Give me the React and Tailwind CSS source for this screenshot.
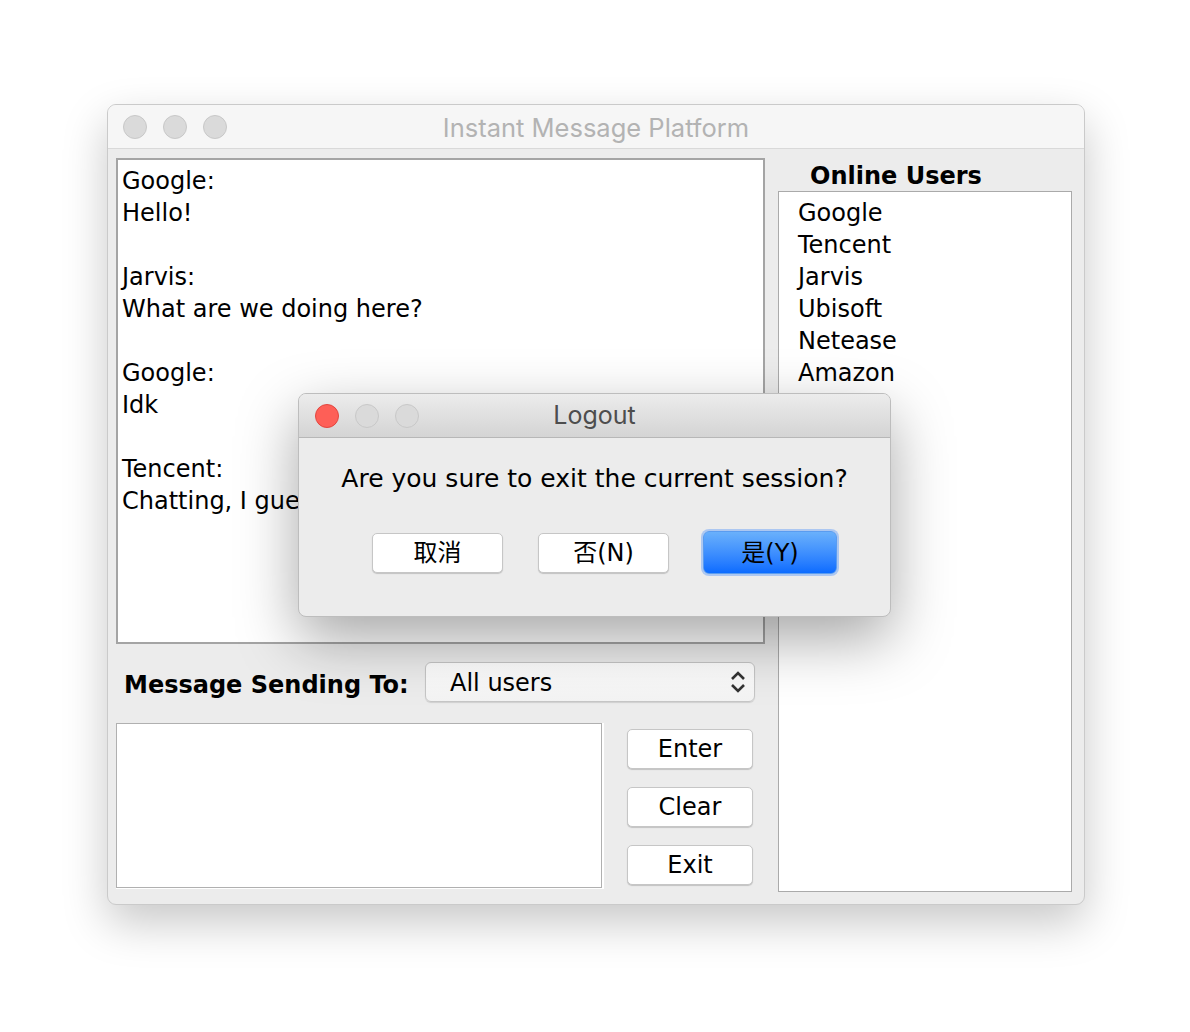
import React from "react";

const messages = [
  "Google:",
  "Hello!",
  "",
  "Jarvis:",
  "What are we doing here?",
  "",
  "Google:",
  "Idk",
  "",
  "Tencent:",
  "Chatting, I guess",
];

const users = ["Google", "Tencent", "Jarvis", "Ubisoft", "Netease", "Amazon"];

function Light({ color }) {
  // macOS style window button
  return (
    <span
      className={
        color === "red"
          ? "w-[24px] h-[24px] rounded-full bg-[#fe5f57] border border-[#e2463f]"
          : "w-[24px] h-[24px] rounded-full bg-[#dadada] border border-[#c8c8c8]"
      }
    />
  );
}

function MacButton({ children, className = "" }) {
  return (
    <button
      className={
        "h-[40px] rounded-[5px] bg-white border border-[#c6c6c6] shadow-[0_1px_1px_rgba(0,0,0,0.18)] text-[24px] leading-none text-black " +
        className
      }
    >
      {children}
    </button>
  );
}

function App() {
  return (
    <div className="relative w-[1190px] h-[1032px] bg-white overflow-hidden font-['DejaVu_Sans','Noto_Sans_CJK_SC',sans-serif]">
      <div className="pt-[104px] pl-[107px]">
        {/* main window */}
        <div className="w-[978px] h-[801px] rounded-[9px] border border-[#cacaca] bg-[#ececec] shadow-[0_18px_45px_rgba(0,0,0,0.22)] overflow-hidden flex flex-col">
          <div className="h-[44px] bg-[#f6f6f6] border-b border-[#d9d9d9] flex items-center">
            <div className="w-[140px] flex items-center gap-[16px] pl-[15px]">
              <Light />
              <Light />
              <Light />
            </div>
            <div className="flex-1 text-center text-[25.5px] leading-[30px] pt-[2px] text-[#b3b3b3] font-['Inter',sans-serif]">
              Instant Message Platform
            </div>
            <div className="w-[140px]" />
          </div>

          <div className="flex-1 flex pt-[9px] pl-[8px]">
            {/* left column */}
            <div className="w-[649px] flex flex-col">
              <div className="h-[486px] bg-white border-2 border-[#a4a4a4] pl-[4px] pt-[5px] text-[24px] leading-[32px] text-black">
                {messages.map((m, i) => (
                  <div key={i} className="h-[32px] whitespace-nowrap">
                    {m}
                  </div>
                ))}
              </div>

              <div className="mt-[18px] h-[40px] flex items-center">
                <span className="pl-[8px] pt-[5px] w-[309px] text-[24px] font-bold text-black whitespace-nowrap">
                  Message Sending To:
                </span>
                <div className="w-[330px] h-[40px] rounded-[6px] border border-[#c6c6c6] bg-gradient-to-b from-white to-[#f3f3f3] shadow-[0_1px_1px_rgba(0,0,0,0.12)] flex items-center pl-[24px] pr-[8px]">
                  <span className="flex-1 text-[24px] pt-[1px] text-black">All users</span>
                  <svg width="16" height="28" viewBox="0 0 16 28" fill="none" stroke="#333" strokeWidth="2.6">
                    <path d="M2 11 L8 5 L14 11" />
                    <path d="M2 17 L8 23 L14 17" />
                  </svg>
                </div>
              </div>

              <div className="mt-[21px] flex">
                <div className="w-[488px] h-[166px] bg-white border-r-2 border-b border-white">
                  <div className="w-[486px] h-[165px] bg-white border border-[#b0b0b0]" />
                </div>
                <div className="ml-[23px] pt-[6px] flex flex-col gap-[18px]">
                  <MacButton className="w-[126px]">Enter</MacButton>
                  <MacButton className="w-[126px]">Clear</MacButton>
                  <MacButton className="w-[126px]">Exit</MacButton>
                </div>
              </div>
            </div>

            {/* right column */}
            <div className="ml-[13px] w-[294px] flex flex-col">
              <div className="h-[33px] pl-[32px] pt-[2px] text-[24px] leading-[33px] font-bold text-black">
                Online Users
              </div>
              <div className="h-[701px] bg-white border border-[#aaaaaa] pl-[19px] pt-[5px] text-[24px] leading-[32px] text-black">
                {users.map((u) => (
                  <div key={u}>{u}</div>
                ))}
              </div>
            </div>
          </div>
        </div>
      </div>

      {/* logout dialog */}
      <div className="absolute left-[298px] top-[393px] w-[593px] h-[224px] rounded-[8px] border border-[#bdbdbd] bg-[#ececec] shadow-[0_22px_60px_rgba(0,0,0,0.35)] overflow-hidden flex flex-col">
        <div className="h-[44px] bg-gradient-to-b from-[#ececec] to-[#d4d4d4] border-b border-[#b7b7b7] flex items-center">
          <div className="w-[140px] flex items-center gap-[16px] pl-[16px]">
            <Light color="red" />
            <Light />
            <Light />
          </div>
          <div className="flex-1 text-center text-[25px] text-[#4d4d4d] font-['Inter',sans-serif]">
            Logout
          </div>
          <div className="w-[140px]" />
        </div>
        <div className="mt-[25px] text-center text-[25px] leading-[32px] text-black">
          Are you sure to exit the current session?
        </div>
        <div className="mt-[36px] pl-[73px] flex items-center">
          <MacButton className="w-[131px]">取消</MacButton>
          <MacButton className="ml-[35px] w-[131px]">否(N)</MacButton>
          <button className="ml-[34px] w-[134px] h-[43px] rounded-[6px] border border-[#5a9cf0] bg-gradient-to-b from-[#6ab0fb] to-[#0a6bff] shadow-[0_0_0_2px_rgba(120,170,245,0.55)] text-[24px] leading-none text-black">
            是(Y)
          </button>
        </div>
      </div>
    </div>
  );
}

export default App;
